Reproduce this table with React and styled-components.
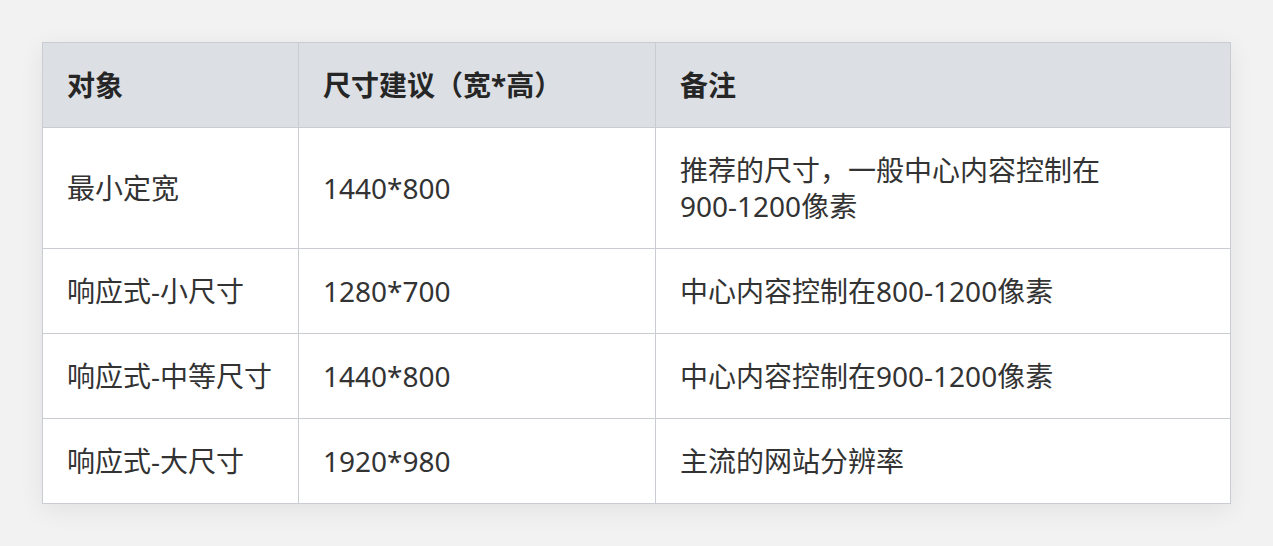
import React from "react";
import styled, { createGlobalStyle } from "styled-components";

const GlobalStyle = createGlobalStyle`
  html, body {
    margin: 0;
    padding: 0;
    background: #f2f2f2;
  }
  body {
    font-family: "Noto Sans", "Noto Sans CJK SC", sans-serif;
  }
`;

const columns = [
  { title: "对象", width: 256 },
  { title: "尺寸建议（宽*高）", width: 357 },
  { title: "备注", width: 575 },
];

const rows = [
  { target: "最小定宽", size: "1440*800", note: "推荐的尺寸，一般中心内容控制在900-1200像素" },
  { target: "响应式-小尺寸", size: "1280*700", note: "中心内容控制在800-1200像素" },
  { target: "响应式-中等尺寸", size: "1440*800", note: "中心内容控制在900-1200像素" },
  { target: "响应式-大尺寸", size: "1920*980", note: "主流的网站分辨率" },
];

const Page = styled.div`
  padding: 42px;
  min-height: 546px;
  box-sizing: border-box;
`;

const Table = styled.table`
  width: 1188px;
  border-collapse: collapse;
  table-layout: fixed;
  background: #fff;
  box-shadow: 0 6px 24px rgba(0, 0, 0, 0.07);
`;

const Th = styled.th`
  background: #dcdfe3;
  border: 1px solid #c9cdd3;
  padding: 24px;
  text-align: left;
  font-size: 28px;
  line-height: 36px;
  font-weight: 700;
  color: #262626;
`;

const Td = styled.td`
  border: 1px solid #c9cdd3;
  padding: 24px;
  font-size: 28px;
  line-height: 36px;
  color: #333;
  vertical-align: middle;
`;

const NoBreak = styled.span`
  white-space: nowrap;
`;

const renderNote = (note) => {
  const m = note.match(/^(.*?)(\d+-\d+像素)$/);
  if (!m) return note;
  return (
    <>
      {m[1]}
      <NoBreak>{m[2]}</NoBreak>
    </>
  );
};

const App = () => {
  return (
    <Page>
      <GlobalStyle />
      <Table>
        <colgroup>
          {columns.map((c) => (
            <col key={c.title} style={{ width: c.width }} />
          ))}
        </colgroup>
        <thead>
          <tr>
            {columns.map((c) => (
              <Th key={c.title}>{c.title}</Th>
            ))}
          </tr>
        </thead>
        <tbody>
          {rows.map((r) => (
            <tr key={r.target}>
              <Td>{r.target}</Td>
              <Td>{r.size}</Td>
              <Td>{renderNote(r.note)}</Td>
            </tr>
          ))}
        </tbody>
      </Table>
    </Page>
  );
};

export default App;
